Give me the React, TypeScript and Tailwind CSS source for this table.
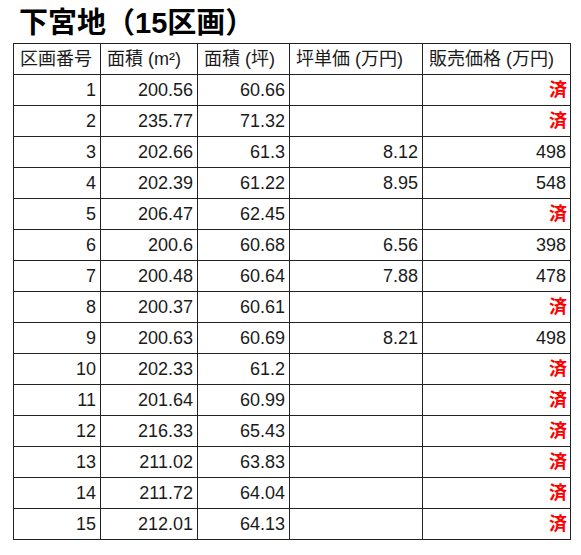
const rows: [number, string, string, string, string][] = [
  [1, "200.56", "60.66", "", "済"],
  [2, "235.77", "71.32", "", "済"],
  [3, "202.66", "61.3", "8.12", "498"],
  [4, "202.39", "61.22", "8.95", "548"],
  [5, "206.47", "62.45", "", "済"],
  [6, "200.6", "60.68", "6.56", "398"],
  [7, "200.48", "60.64", "7.88", "478"],
  [8, "200.37", "60.61", "", "済"],
  [9, "200.63", "60.69", "8.21", "498"],
  [10, "202.33", "61.2", "", "済"],
  [11, "201.64", "60.99", "", "済"],
  [12, "216.33", "65.43", "", "済"],
  [13, "211.02", "63.83", "", "済"],
  [14, "211.72", "64.04", "", "済"],
  [15, "212.01", "64.13", "", "済"],
];

const headers = ["区画番号", "面積 (m²)", "面積 (坪)", "坪単価 (万円)", "販売価格 (万円)"];
const widths = ["w-[87px]", "w-[97px]", "w-[92px]", "w-[133px]", "w-[148px]"];

export default function App() {
  return (
    <div className="w-[581px] h-[555px] bg-white text-[#1a1a1a] font-['Liberation_Sans','Noto_Sans_CJK_JP',sans-serif]">
      <h1 className="pl-[19px] pt-[7px] h-[43px] text-[29px] leading-[32px] font-bold text-black">
        下宮地（15区画）
      </h1>
      <table className="ml-[13px] border-collapse table-fixed text-[18px]">
        <thead>
          <tr className="h-[31px]">
            {headers.map((h, i) => (
              <th
                key={h}
                className={`${widths[i]} border-[1.5px] border-[#222] px-[6px] text-left font-normal whitespace-nowrap`}
              >
                {h}
              </th>
            ))}
          </tr>
        </thead>
        <tbody>
          {rows.map((r) => (
            <tr key={r[0]} className="h-[31px]">
              <td className="border-[1.5px] border-[#222] pr-[4px] text-right">{r[0]}</td>
              <td className="border-[1.5px] border-[#222] pr-[4px] text-right">{r[1]}</td>
              <td className="border-[1.5px] border-[#222] pr-[4px] text-right">{r[2]}</td>
              <td className="border-[1.5px] border-[#222] pr-[4px] text-right">{r[3]}</td>
              <td
                className={
                  r[4] === "済"
                    ? "border-[1.5px] border-[#222] pr-[3px] text-right font-bold text-[#ff0000]"
                    : "border-[1.5px] border-[#222] pr-[4px] text-right"
                }
              >
                {r[4]}
              </td>
            </tr>
          ))}
        </tbody>
      </table>
    </div>
  );
}
